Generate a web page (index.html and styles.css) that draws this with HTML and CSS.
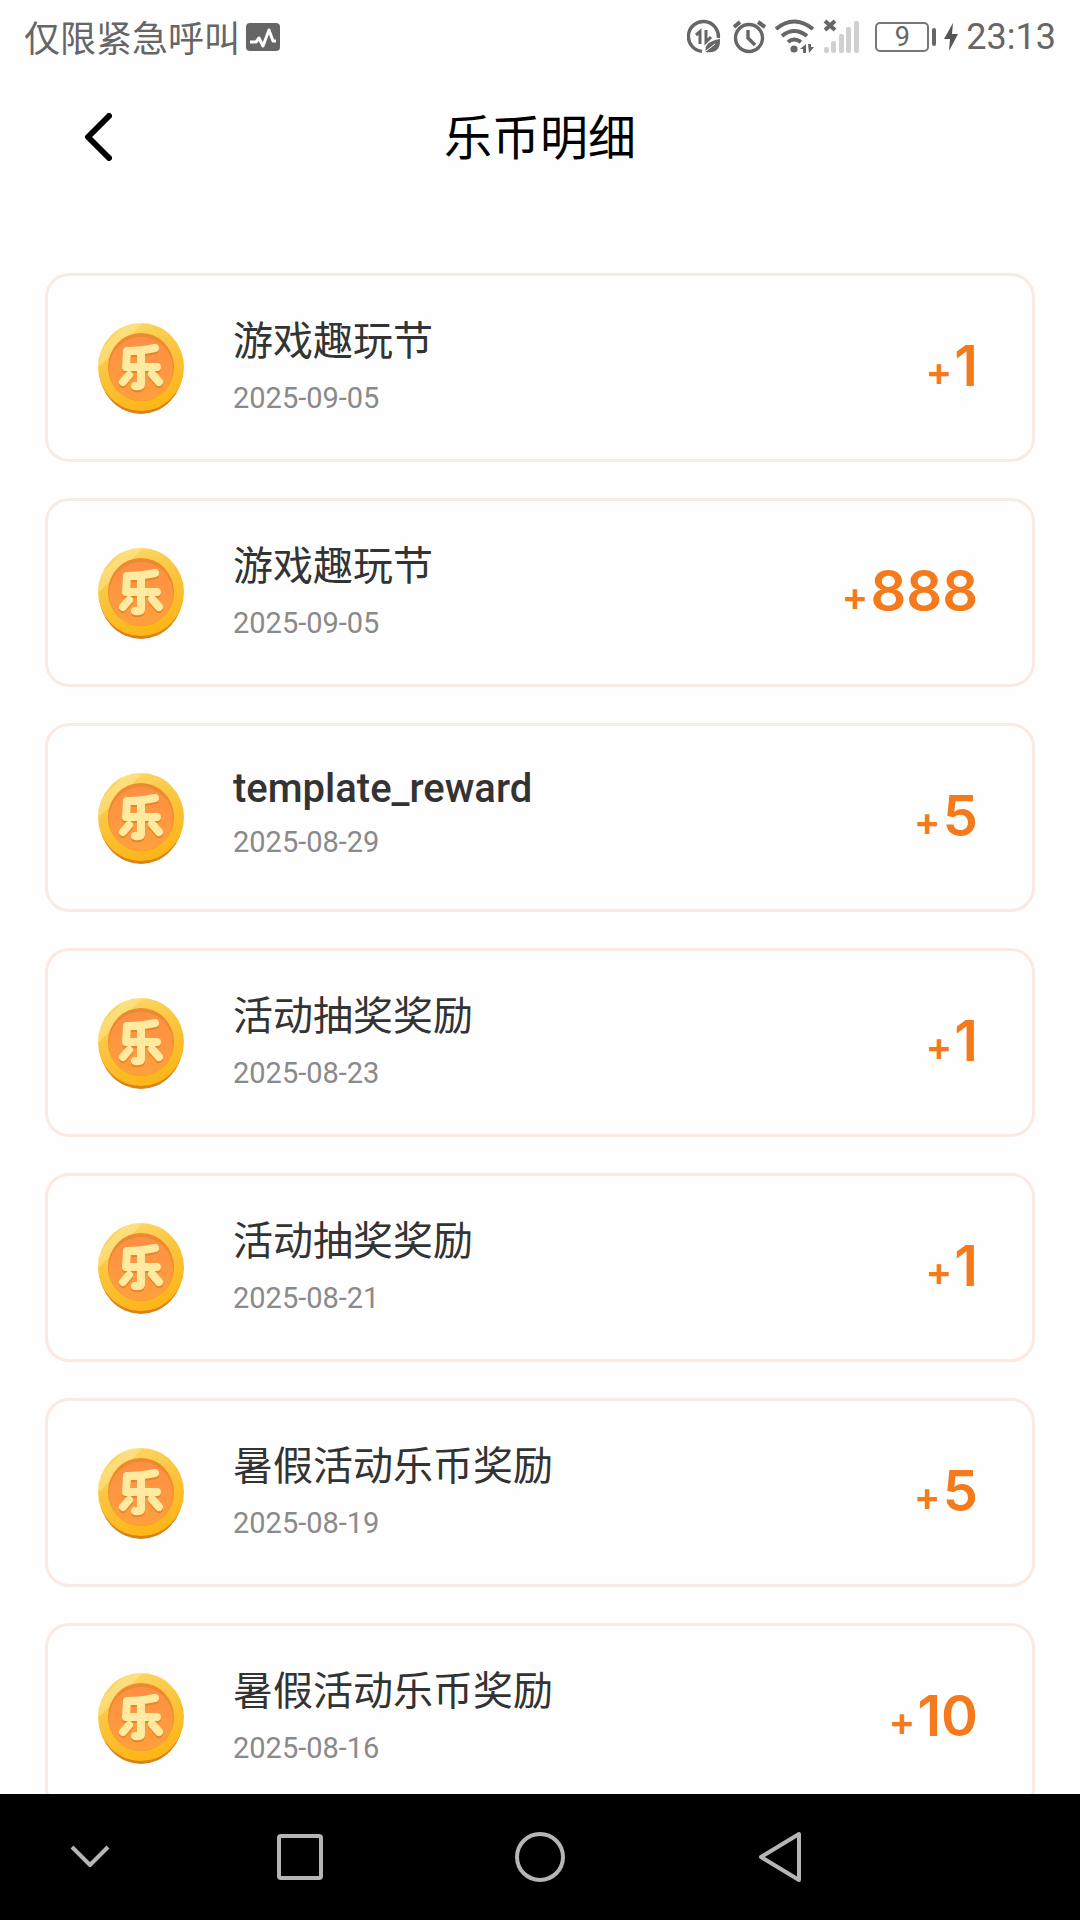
FILE: index.html
```html
<!DOCTYPE html>
<html lang="zh-CN">
<head>
<meta charset="utf-8">
<meta name="viewport" content="width=device-width, initial-scale=1">
<title>乐币明细</title>
<link rel="stylesheet" href="styles.css">
</head>
<body>
<svg class="defs" aria-hidden="true">
  <defs>
    <linearGradient id="rim" x1="0.25" y1="0" x2="0.6" y2="1">
      <stop offset="0" stop-color="#fbd968"/>
      <stop offset="0.45" stop-color="#fac43c"/>
      <stop offset="1" stop-color="#fdb515"/>
    </linearGradient>
    <linearGradient id="face" x1="0" y1="0" x2="0" y2="1">
      <stop offset="0" stop-color="#fe8f45"/>
      <stop offset="1" stop-color="#ffa03c"/>
    </linearGradient>
    <clipPath id="rim-clip"><ellipse cx="43" cy="45" rx="43" ry="44"/></clipPath>
    <symbol id="coin" viewBox="0 0 86 92">
      <ellipse cx="43" cy="47" rx="42" ry="45" fill="#d98216"/>
      <ellipse cx="43" cy="45" rx="43" ry="44" fill="url(#rim)"/>
      <path d="M0 30 L34 -4 L50 -4 L0 46Z" fill="#fff3b8" opacity="0.35" clip-path="url(#rim-clip)"/>
      <ellipse cx="43" cy="45" rx="33" ry="34" fill="#ed8a2e"/>
      <ellipse cx="43" cy="47" rx="32" ry="32" fill="url(#face)"/>
      <g fill="none" stroke-linecap="round" stroke-linejoin="round" stroke-width="8">
        <path stroke="#e5842a" transform="translate(0 2)" d="M57 26Q44 29 29 29L28 45H59M43 31V62Q43 65 37 64M31 53L25 60M54 52L61 60"/>
        <path stroke="#ffeaa0" d="M57 26Q44 29 29 29L28 45H59M43 31V62Q43 65 37 64M31 53L25 60M54 52L61 60"/>
      </g>
    </symbol>
  </defs>
</svg>
<div class="screen">
  <header class="status-bar">
    <div class="status-group">
      <span class="carrier">仅限紧急呼叫</span>
      <svg class="activity" viewBox="0 0 34 28" aria-hidden="true">
        <rect width="34" height="28" rx="4" fill="#666"/>
        <path d="M4 19H10L13 15L17 23L23 7L27 18H30" fill="none" stroke="#fff" stroke-width="3" stroke-linejoin="round"/>
      </svg>
    </div>
    <div class="status-group">
      <svg class="status-icons" viewBox="0 0 176 36" aria-hidden="true">
        <g fill="none" stroke="#666" stroke-width="3.4">
          <path d="M15 32.4A15 15 0 1 1 31.3 19"/>
          <path d="M9 16L13 12.500V25M19 11V23L24 18" stroke-width="3"/>
          <circle cx="62" cy="19" r="13.5"/>
          <path d="M61 11V19L68 26"/>
          <path d="M47 8L53 3M71 3L78 8" stroke-width="4"/>
          <path d="M89 10Q107 -5 126 10" stroke-width="4"/>
          <path d="M95 17Q107 7 120 17M101 23Q107 18 114 23" stroke-width="4"/>
          <path d="M138 2L148 11M148 2L138 11" stroke-width="4"/>
        </g>
        <path d="M19 33Q16 23 33 20Q34 35 19 33Z" fill="#666"/>
        <path d="M19 32L28 25" stroke="#fff"/>
        <circle cx="107" cy="30" r="3.6" fill="#666"/>
        <path d="M113 30L119 25V34H116V30ZM121 25H124V28H127L122 34Z" fill="#666"/>
        <g fill="#d0d0d0"><rect x="137" y="28" width="5" height="6" rx="2"/><rect x="144" y="22" width="5" height="12" rx="2"/><rect x="152" y="15" width="5" height="19" rx="2"/><rect x="159" y="8" width="5" height="26" rx="2"/><rect x="167" y="2" width="5" height="32" rx="2"/></g>
      </svg>
      <span class="battery">9</span>
      <svg class="bolt" viewBox="0 0 14 28" aria-hidden="true"><path d="M9 0L0 16H6L5 28L14 11H8Z" fill="#555"/></svg>
      <time class="clock">23:13</time>
    </div>
  </header>
  <div class="title-bar">
    <button class="back" type="button" aria-label="返回">
      <svg viewBox="0 0 28 48" aria-hidden="true"><path d="M25 3L4 24L25 45" fill="none" stroke="#000" stroke-width="6" stroke-linecap="round" stroke-linejoin="round"/></svg>
    </button>
    <h1 class="page-title">乐币明细</h1>
  </div>
  <main class="content">
    <ul class="records">
      <li class="record"><svg class="coin" role="img" aria-label="乐币"><use href="#coin"/></svg><div class="info"><h2 class="name">游戏趣玩节</h2><time class="date">2025-09-05</time></div><p class="amount"><span class="sign">+</span>1</p></li>
      <li class="record"><svg class="coin" role="img" aria-label="乐币"><use href="#coin"/></svg><div class="info"><h2 class="name">游戏趣玩节</h2><time class="date">2025-09-05</time></div><p class="amount"><span class="sign">+</span>888</p></li>
      <li class="record"><svg class="coin" role="img" aria-label="乐币"><use href="#coin"/></svg><div class="info"><h2 class="name name-latin">template_reward</h2><time class="date">2025-08-29</time></div><p class="amount"><span class="sign">+</span>5</p></li>
      <li class="record"><svg class="coin" role="img" aria-label="乐币"><use href="#coin"/></svg><div class="info"><h2 class="name">活动抽奖奖励</h2><time class="date">2025-08-23</time></div><p class="amount"><span class="sign">+</span>1</p></li>
      <li class="record"><svg class="coin" role="img" aria-label="乐币"><use href="#coin"/></svg><div class="info"><h2 class="name">活动抽奖奖励</h2><time class="date">2025-08-21</time></div><p class="amount"><span class="sign">+</span>1</p></li>
      <li class="record"><svg class="coin" role="img" aria-label="乐币"><use href="#coin"/></svg><div class="info"><h2 class="name">暑假活动乐币奖励</h2><time class="date">2025-08-19</time></div><p class="amount"><span class="sign">+</span>5</p></li>
      <li class="record"><svg class="coin" role="img" aria-label="乐币"><use href="#coin"/></svg><div class="info"><h2 class="name">暑假活动乐币奖励</h2><time class="date">2025-08-16</time></div><p class="amount"><span class="sign">+</span>10</p></li>
    </ul>
  </main>
  <nav class="nav-bar" aria-label="系统导航">
    <button class="nav-button" type="button" aria-label="收起"><svg width="40" height="24" viewBox="0 0 40 24"><path d="M2 2L20 20L38 2"/></svg></button>
    <button class="nav-button" type="button" aria-label="最近任务"><svg width="48" height="48" viewBox="0 0 48 48"><rect x="3" y="3" width="42" height="42" rx="2"/></svg></button>
    <button class="nav-button" type="button" aria-label="主屏幕"><svg width="52" height="52" viewBox="0 0 52 52"><circle cx="26" cy="26" r="23"/></svg></button>
    <button class="nav-button" type="button" aria-label="返回上一级"><svg width="44" height="52" viewBox="0 0 44 52"><path d="M41 3V49L3 26Z"/></svg></button>
  </nav>
</div>
</body>
</html>
```
FILE: styles.css
```css
* {
  box-sizing: border-box;
}

body {
  margin: 0;
  background: #fefefe;
  font-family: Roboto, "Noto Sans CJK SC", sans-serif;
}

h1, h2, p, ul {
  margin: 0;
  padding: 0;
}

button {
  padding: 0;
  border: 0;
  background: none;
}

svg {
  display: block;
  flex: none;
}

.defs {
  position: absolute;
  width: 0;
  height: 0;
}

.screen {
  display: flex;
  flex-direction: column;
  height: 100vh;
}

/* Status bar */
.status-bar {
  display: flex;
  flex: none;
  justify-content: space-between;
  align-items: center;
  height: 74px;
  padding: 0 24px;
  color: #666;
}

.status-group {
  display: flex;
  align-items: center;
}

.carrier {
  padding-bottom: 2px;
  font-size: 36px;
  font-weight: 400;
}

.activity {
  width: 34px;
  height: 28px;
  margin-left: 6px;
}

.status-icons {
  width: 176px;
  height: 36px;
}

.battery {
  position: relative;
  width: 54px;
  height: 30px;
  margin-left: 12px;
  border: 2px solid #777;
  border-radius: 5px;
  font-size: 27px;
  line-height: 27px;
  text-align: center;
}

.battery::after {
  content: "";
  position: absolute;
  top: 4px;
  right: -9px;
  width: 4px;
  height: 18px;
  border-radius: 2px;
  background: #666;
}

.bolt {
  width: 14px;
  height: 28px;
  margin: 0 8px 0 15px;
}

.clock {
  font-size: 36px;
}

/* Title bar */
.title-bar {
  display: grid;
  flex: none;
  grid-template-columns: 80px 1fr 80px;
  align-items: center;
  height: 126px;
  padding: 0 58px;
}

.back {
  display: grid;
  place-items: center;
  height: 80px;
}

.back svg {
  width: 28px;
  height: 48px;
}

.page-title {
  padding-bottom: 6px;
  color: #000;
  font-size: 48px;
  font-weight: 400;
  text-align: center;
}

/* Record list */
.content {
  flex: 1;
  min-height: 0;
  overflow: hidden;
  padding: 73px 45px 0;
}

.records {
  display: flex;
  flex-direction: column;
  gap: 36px;
  list-style: none;
}

.record {
  display: flex;
  align-items: center;
  height: 189px;
  padding: 0 54px 0 50px;
  border: 3px solid #f8ebe4;
  border-radius: 24px;
}

.coin {
  width: 86px;
  height: 92px;
}

.info {
  flex: 1;
  align-self: flex-start;
  padding: 37px 0 0 49px;
}

.name {
  color: #333;
  font-size: 40px;
  font-weight: 400;
  line-height: 58px;
}

.name-latin {
  font-weight: 500;
  line-height: 52px;
}

.date {
  display: block;
  color: #8a8a8a;
  font-size: 29px;
  line-height: 54px;
}

.amount {
  padding-bottom: 4px;
  color: #f47a1c;
  font-family: Inter, sans-serif;
  font-size: 56px;
  font-weight: 600;
}

.sign {
  margin-right: 2px;
  font-size: 40px;
}

/* System navigation */
.nav-bar {
  display: grid;
  flex: none;
  grid-template-columns: 180px repeat(3, 240px) 1fr;
  height: 126px;
  background: #000;
}

.nav-button {
  display: grid;
  place-items: center;
}

.nav-button path,
.nav-button rect,
.nav-button circle {
  fill: none;
  stroke: #b5b5b5;
  stroke-width: 4px;
  stroke-linejoin: round;
}
```
